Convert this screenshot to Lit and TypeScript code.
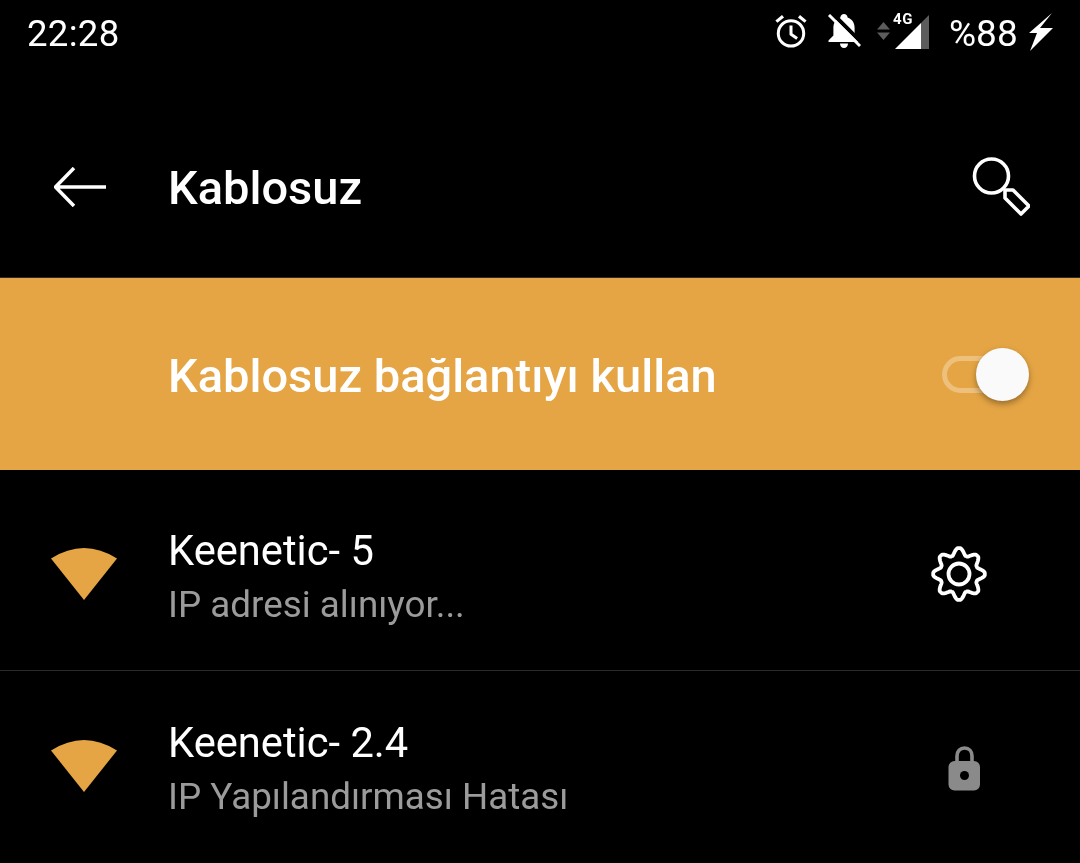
import { LitElement, html, css, svg } from 'lit';
import { customElement } from 'lit/decorators.js';

const gearPath = () => {
  const pts: string[] = [];
  for (let i = 0; i < 240; i++) {
    const a = (i / 240) * Math.PI * 2;
    const c = Math.cos(a * 8);
    const t = Math.max(-1, Math.min(1, c * 1.1));
    const r = 22.5 + 3.3 * t;
    pts.push(`${(30 + r * Math.sin(a)).toFixed(2)} ${(30 - r * Math.cos(a)).toFixed(2)}`);
  }
  return `M${pts.join('L')}Z`;
};

const wifiIcon = html`<svg class="wifi" width="66" height="52" viewBox="0 0 66 52">
  <path d="M0 10.5Q33 -10.5 66 10.5L33 52Z" fill="#e5a544"></path>
</svg>`;

@customElement('app-root')
export class AppRoot extends LitElement {
  static styles = css`
    :host {
      display: block;
      width: 1080px;
      height: 863px;
      overflow: hidden;
      background: #000;
      color: #fff;
      font-family: Roboto, sans-serif;
    }

    svg {
      display: block;
      flex: none;
    }

    /* own layer, so the text gets the greyscale edges of the photo */
    .time,
    .battery,
    .four-g,
    h1,
    .master span,
    .text {
      will-change: transform;
    }

    .status {
      height: 67px;
      display: flex;
      align-items: center;
      padding: 0 27px;
      font-size: 37px;
    }

    .time {
      flex: 1;
      font-size: 36.6px;
      letter-spacing: 0.3px;
    }

    .alarm {
      margin: 0 20px 4px 0;
    }

    .bell {
      margin: 0 16px 6px 0;
    }

    .arrows {
      margin: 0 5px 6px 0;
    }

    .signal {
      position: relative;
      margin: 0 19px 5px 0;
    }

    .four-g {
      position: absolute;
      left: -2px;
      top: -2px;
      font-size: 15px;
      line-height: 15px;
      font-weight: 700;
      letter-spacing: 0.6px;
    }

    .battery {
      margin-right: 11px;
    }

    .bolt {
      margin-bottom: 4px;
    }

    .toolbar {
      height: 211px;
      display: flex;
      align-items: center;
      box-sizing: border-box;
      padding: 30px 50px 0 54px;
      border-bottom: 1px solid #2b2b2b;
    }

    .toolbar h1 {
      flex: 1;
      margin: 0 0 0 62px;
      font-size: 47px;
      font-weight: 500;
    }

    .master {
      height: 192px;
      display: flex;
      align-items: center;
      justify-content: space-between;
      padding: 0 51px 0 168px;
      background: #e5a544;
      font-size: 47px;
      font-weight: 500;
    }

    .master span {
      margin-top: 2px;
    }

    .toggle {
      position: relative;
      width: 87px;
      height: 37px;
      margin-top: 1px;
    }

    .track {
      box-sizing: border-box;
      width: 60px;
      height: 37px;
      border: 5px solid rgba(255, 255, 255, 0.3);
      border-radius: 19px;
    }

    .thumb {
      position: absolute;
      right: 0;
      top: -8px;
      width: 53px;
      height: 53px;
      border-radius: 50%;
      background: #fafafa;
      box-shadow: 0 3px 6px rgba(0, 0, 0, 0.35);
    }

    .row {
      display: flex;
      align-items: center;
      box-sizing: border-box;
      height: 200px;
      padding: 8px 0 0 51px;
    }

    .row + .row {
      height: 191px;
      padding-top: 0;
      border-top: 1px solid #2b2b2b;
    }

    .wifi {
      margin-right: 51px;
    }

    .text {
      flex: 1;
      margin-top: 8px;
    }

    .name {
      font-size: 41.7px;
      line-height: 54px;
    }

    .sub {
      font-size: 36.8px;
      line-height: 54px;
      color: #9b9b9b;
    }

    .gear {
      margin-right: 91px;
    }

    .lock {
      margin: 4px 99px 0 0;
    }
  `;

  render() {
    return html`
      <div class="status">
        <span class="time">22:28</span>
        <svg class="alarm" width="32" height="35" viewBox="0 0 34 36" fill="none" stroke="#fff" stroke-width="3.2">
          <circle cx="17" cy="20" r="13.5"></circle>
          <path d="M17 11.5V21L23.5 25.5" stroke-linejoin="round"></path>
          <path d="M1.5 7.5L8.5 1.8M32.5 7.5L25.5 1.8" stroke-width="3.4"></path>
        </svg>
        <svg class="bell" width="34" height="34" viewBox="0 0 34 34">
          <path
            d="M17 0C19 0 20.4 1.4 20.6 3.4C25.4 5 27.6 9 27.6 14V21.5L32.5 26.5V28H1.5V26.5L6.4 21.5V14C6.4 9 8.6 5 13.4 3.4C13.6 1.4 15 0 17 0Z"
            fill="#fff"
          ></path>
          <path d="M13 29.5H21C21 32 19.4 34 17 34C14.6 34 13 32 13 29.5Z" fill="#fff"></path>
          <path d="M5 -1L36 30" stroke="#000" stroke-width="4"></path>
          <path d="M2 1L33 32" stroke="#fff" stroke-width="3"></path>
        </svg>
        <svg class="arrows" width="13" height="18" viewBox="0 0 13 18" fill="#5c5c5c">
          <path d="M6.5 0L13 7.5H0Z"></path>
          <path d="M0 10.5H13L6.5 18Z"></path>
        </svg>
        <div class="signal">
          <svg width="35" height="35" viewBox="0 0 35 35">
            <path d="M0 35L26 9V35Z" fill="#fff"></path>
            <path d="M26 9L34 1V35H26Z" fill="#5c5c5c"></path>
          </svg>
          <span class="four-g">4G</span>
        </div>
        <span class="battery">%88</span>
        <svg class="bolt" width="24" height="38" viewBox="0 0 24 38">
          <path d="M23 0L11 15H24L1 38L8 20H0Z" fill="#fff"></path>
        </svg>
      </div>

      <div class="toolbar">
        <svg width="52" height="40" viewBox="0 0 52 40" fill="none" stroke="#fff" stroke-width="3.5">
          <path d="M52 20H2M20 1L1.5 20L20 39"></path>
        </svg>
        <h1>Kablosuz</h1>
        <svg width="60" height="60" viewBox="0 0 60 60" fill="none" stroke="#fff" stroke-width="3.6" stroke-linejoin="round">
          <circle cx="21.5" cy="19" r="17"></circle>
          <path d="M35 33H43L59 49L51 57L35 41Z"></path>
        </svg>
      </div>

      <div class="master">
        <span>Kablosuz bağlantıyı kullan</span>
        <div class="toggle">
          <div class="track"></div>
          <div class="thumb"></div>
        </div>
      </div>

      <div class="row">
        ${wifiIcon}
        <div class="text">
          <div class="name">Keenetic- 5</div>
          <div class="sub">IP adresi alınıyor...</div>
        </div>
        <svg class="gear" width="60" height="60" viewBox="0 0 60 60" fill="none" stroke="#fff" stroke-width="3.8" stroke-linejoin="round">
          ${svg`<path d=${gearPath()}></path>`}
          <circle cx="30" cy="30" r="10.5"></circle>
        </svg>
      </div>

      <div class="row">
        ${wifiIcon}
        <div class="text">
          <div class="name">Keenetic- 2.4</div>
          <div class="sub">IP Yapılandırması Hatası</div>
        </div>
        <svg class="lock" width="33" height="45" viewBox="0 0 33 45">
          <path d="M9 18V10C9 5.4 12 2 16.5 2C21 2 24 5.4 24 10V18" fill="none" stroke="#8a8a8a" stroke-width="3.6"></path>
          <rect x="0.5" y="15" width="31.5" height="29.5" rx="6" fill="#8a8a8a"></rect>
          <circle cx="16.5" cy="29.5" r="4.5" fill="#000"></circle>
        </svg>
      </div>
    `;
  }
}
